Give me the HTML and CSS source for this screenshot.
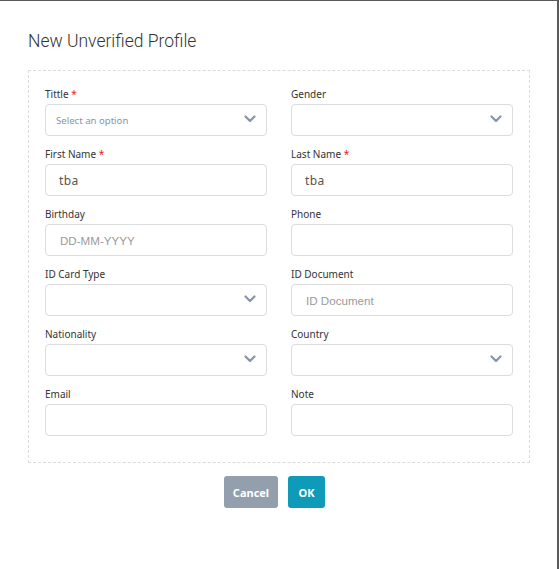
FILE: index.html
```html
<!DOCTYPE html>
<html>
<head>
<meta charset="utf-8">
<link rel="stylesheet" href="styles.css">
</head>
<body>
<div class="modal">
  <h1 class="title">New Unverified Profile</h1>
  <div class="form-box">
    <div class="grid">
      <div class="field">
        <label class="label">Tittle <span class="req">*</span></label>
        <div class="control select"><span class="select-ph">Select an option</span><svg class="chev" viewBox="0 0 12 8" width="12" height="8"><path d="M1.5 1.5 L6 6 L10.5 1.5" fill="none" stroke="#8795a6" stroke-width="2.2" stroke-linecap="round" stroke-linejoin="round"/></svg></div>
      </div>
      <div class="field">
        <label class="label">Gender</label>
        <div class="control select"><span class="select-ph"></span><svg class="chev" viewBox="0 0 12 8" width="12" height="8"><path d="M1.5 1.5 L6 6 L10.5 1.5" fill="none" stroke="#8795a6" stroke-width="2.2" stroke-linecap="round" stroke-linejoin="round"/></svg></div>
      </div>
      <div class="field">
        <label class="label">First Name <span class="req">*</span></label>
        <div class="control text"><span class="value">tba</span></div>
      </div>
      <div class="field">
        <label class="label">Last Name <span class="req">*</span></label>
        <div class="control text"><span class="value">tba</span></div>
      </div>
      <div class="field">
        <label class="label">Birthday</label>
        <div class="control text"><span class="ph">DD-MM-YYYY</span></div>
      </div>
      <div class="field">
        <label class="label">Phone</label>
        <div class="control text"></div>
      </div>
      <div class="field">
        <label class="label">ID Card Type</label>
        <div class="control select"><span class="select-ph"></span><svg class="chev" viewBox="0 0 12 8" width="12" height="8"><path d="M1.5 1.5 L6 6 L10.5 1.5" fill="none" stroke="#8795a6" stroke-width="2.2" stroke-linecap="round" stroke-linejoin="round"/></svg></div>
      </div>
      <div class="field">
        <label class="label">ID Document</label>
        <div class="control text"><span class="ph">ID Document</span></div>
      </div>
      <div class="field">
        <label class="label">Nationality</label>
        <div class="control select"><span class="select-ph"></span><svg class="chev" viewBox="0 0 12 8" width="12" height="8"><path d="M1.5 1.5 L6 6 L10.5 1.5" fill="none" stroke="#8795a6" stroke-width="2.2" stroke-linecap="round" stroke-linejoin="round"/></svg></div>
      </div>
      <div class="field">
        <label class="label">Country</label>
        <div class="control select"><span class="select-ph"></span><svg class="chev" viewBox="0 0 12 8" width="12" height="8"><path d="M1.5 1.5 L6 6 L10.5 1.5" fill="none" stroke="#8795a6" stroke-width="2.2" stroke-linecap="round" stroke-linejoin="round"/></svg></div>
      </div>
      <div class="field">
        <label class="label">Email</label>
        <div class="control text"></div>
      </div>
      <div class="field">
        <label class="label">Note</label>
        <div class="control text"></div>
      </div>
    </div>
  </div>
  <div class="actions">
    <button class="btn btn-cancel">Cancel</button>
    <button class="btn btn-ok">OK</button>
  </div>
</div>
</body>
</html>
```

FILE: styles.css
```css
html, body {
  margin: 0;
  padding: 0;
}
body {
  background: #5a5a5a;
  width: 559px;
  height: 569px;
  overflow: hidden;
  font-family: "Noto Sans", "Open Sans", sans-serif;
}
.modal {
  margin-top: 1px;
  width: 557px;
  height: 568px;
  background: #ffffff;
  box-sizing: border-box;
  padding: 28px 27px 0 28px;
}
.title {
  margin: 0 0 17px 0;
  font-family: Roboto, "Noto Sans", sans-serif;
  font-size: 17.5px;
  line-height: 24px;
  font-weight: 300;
  color: #333;
}
.form-box {
  border: 1px dashed #dcdcdc;
  padding: 15px 16px 26px 16px;
}
.grid {
  display: grid;
  grid-template-columns: 222px 222px;
  column-gap: 24px;
  row-gap: 10px;
}
.field {
  display: flex;
  flex-direction: column;
}
.label {
  font-size: 10px;
  line-height: 16px;
  height: 16px;
  margin-bottom: 2px;
  color: #333;
}
.req {
  color: #e41b1b;
}
.control {
  height: 32px;
  box-sizing: border-box;
  border: 1px solid #dcdcdc;
  border-radius: 4px;
  display: flex;
  align-items: center;
}
.select {
  justify-content: space-between;
  padding: 0 10px 0 10px;
}
.select-ph {
  font-size: 9.6px;
  color: #8a94a4;
}
.chev {
  display: block;
  margin-top: -2px;
}
.text {
  padding: 0 13px;
}
.value {
  font-size: 12px;
  color: #555;
  letter-spacing: 0.4px;
}
.ph {
  font-family: "Liberation Sans", Arial, sans-serif;
  font-size: 11.6px;
  color: #9a9a9a;
  padding-left: 1px;
}
.actions {
  display: flex;
  justify-content: center;
  gap: 10px;
  margin-top: 13px;
  padding-right: 9px;
}
.btn {
  height: 32px;
  border: none;
  border-radius: 3px;
  color: #fff;
  font-family: "Noto Sans", sans-serif;
  font-weight: 700;
  font-size: 11px;
  padding: 0;
  cursor: pointer;
}
.btn-cancel {
  width: 54px;
  background: #939fac;
}
.btn-ok {
  width: 37px;
  background: #0f9bb8;
}
```
